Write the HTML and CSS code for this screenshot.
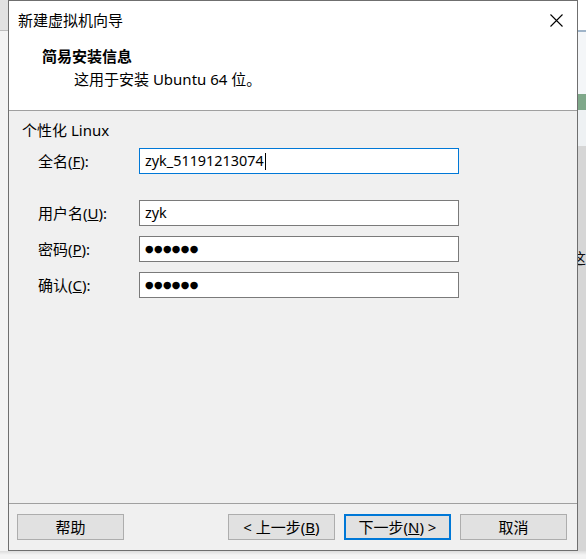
FILE: index.html
```
<!DOCTYPE html>
<html lang="zh-CN">
<head>
<meta charset="utf-8">
<title>新建虚拟机向导</title>
<link rel="stylesheet" href="styles.css">
</head>
<body>
<div class="desk">
  <div class="side side-left"></div>
  <div class="dialog">
    <div class="titlebar">
      <span class="title">新建虚拟机向导</span>
      <svg class="close" width="13" height="13" viewBox="0 0 13 13"><path d="M0.5 0.5 L12.5 12.5 M12.5 0.5 L0.5 12.5" stroke="#000" stroke-width="1.1" fill="none"/></svg>
    </div>
    <div class="header">
      <div class="h-title">简易安装信息</div>
      <div class="h-sub">这用于安装 Ubuntu 64 位。</div>
    </div>
    <div class="body">
      <div class="group">个性化 Linux</div>
      <div class="form">
        <div class="row row-first">
          <span class="label">全名(<u>F</u>):</span>
          <div class="field focus">zyk_51191213074<span class="caret"></span></div>
        </div>
        <div class="row">
          <span class="label">用户名(<u>U</u>):</span>
          <div class="field">zyk</div>
        </div>
        <div class="row">
          <span class="label">密码(<u>P</u>):</span>
          <div class="field"><span class="dots">●●●●●●</span></div>
        </div>
        <div class="row">
          <span class="label">确认(<u>C</u>):</span>
          <div class="field"><span class="dots">●●●●●●</span></div>
        </div>
      </div>
    </div>
    <div class="footer">
      <div class="btn">帮助</div>
      <div class="spacer"></div>
      <div class="btn">&lt; 上一步(<u>B</u>)</div>
      <div class="btn btn-default">下一步(<u>N</u>) &gt;</div>
      <div class="btn">取消</div>
    </div>
  </div>
  <div class="side side-right"><span class="peek">这</span></div>
  <div class="shadow"></div>
</div>
</body>
</html>
```

FILE: styles.css
```
* { box-sizing: border-box; }
html, body { margin: 0; padding: 0; }
body {
  width: 586px;
  height: 559px;
  overflow: hidden;
  background: #f0f0f0;
  font-family: "Noto Sans", "Noto Sans CJK SC", sans-serif;
  font-size: 15px;
  color: #000;
}
.desk {
  display: grid;
  grid-template-columns: 8px 570px 8px;
  grid-template-rows: 551px 8px;
}
.side-left {
  background: linear-gradient(to bottom, #e2e2e2 0 30px, #bcbcbc 30px 31px, #f3f3f3 31px 100%);
}
.side-right {
  overflow: hidden;
  background: linear-gradient(to bottom, #ffffff 0 30px, #9fb4c9 30px 32px, #f4f6f8 32px 94px, #7fa88a 94px 110px, #eef1f3 110px 146px, #d6d6d6 146px 100%);
}
.peek {
  display: block;
  margin-top: 248px;
  margin-left: -7px;
  font-size: 15px;
  line-height: 20px;
  color: #111;
}
.shadow {
  grid-column: 1 / 4;
  background: linear-gradient(to bottom, #dcdcdc, #f4f4f4 4px, #f4f4f4);
}
.dialog {
  width: 570px;
  height: 551px;
  border: 1px solid #6f6f6f;
  background: #f0f0f0;
  display: flex;
  flex-direction: column;
}
.titlebar {
  height: 38px;
  background: #fff;
  display: flex;
  align-items: center;
  padding-left: 9px;
}
.title { line-height: 20px; }
.close { margin-left: auto; margin-right: 14px; }
.header {
  height: 72px;
  background: #fff;
  border-bottom: 1px solid #a0a0a0;
  padding: 7px 0 0 33px;
}
.h-title { font-weight: bold; line-height: 20px; }
.h-sub { line-height: 20px; margin-top: 3px; padding-left: 32px; }
.body {
  flex: 1;
  padding: 9px 0 0 13px;
}
.group { line-height: 20px; }
.form {
  margin-top: 8px;
  padding-left: 16px;
  display: flex;
  flex-direction: column;
  gap: 10px;
}
.row {
  display: flex;
  align-items: center;
  height: 26px;
}
.row-first { margin-bottom: 16px; }
.label { width: 101px; line-height: 20px; }
.field {
  width: 320px;
  height: 26px;
  border: 1px solid #7a7a7a;
  background: #fff;
  padding-left: 5px;
  display: flex;
  align-items: center;
  line-height: 20px;
  font-size: 14.4px;
}
.field.focus { border-color: #0078d7; }
.caret {
  display: inline-block;
  width: 1px;
  height: 17px;
  background: #000;
  margin-left: 1px;
}
.dots {
  font-family: "DejaVu Sans", sans-serif;
  font-size: 9.8px;
  letter-spacing: 0.4px;
}
.footer {
  height: 47px;
  border-top: 1px solid #a0a0a0;
  display: flex;
  align-items: center;
  gap: 9px;
  padding: 0 10px 0 8px;
}
.spacer { flex: 1; }
.btn {
  width: 107px;
  height: 26px;
  border: 1px solid #adadad;
  background: #e1e1e1;
  display: flex;
  align-items: center;
  justify-content: center;
  line-height: 20px;
}
.btn-default {
  border: 2px solid #0078d7;
}
```
